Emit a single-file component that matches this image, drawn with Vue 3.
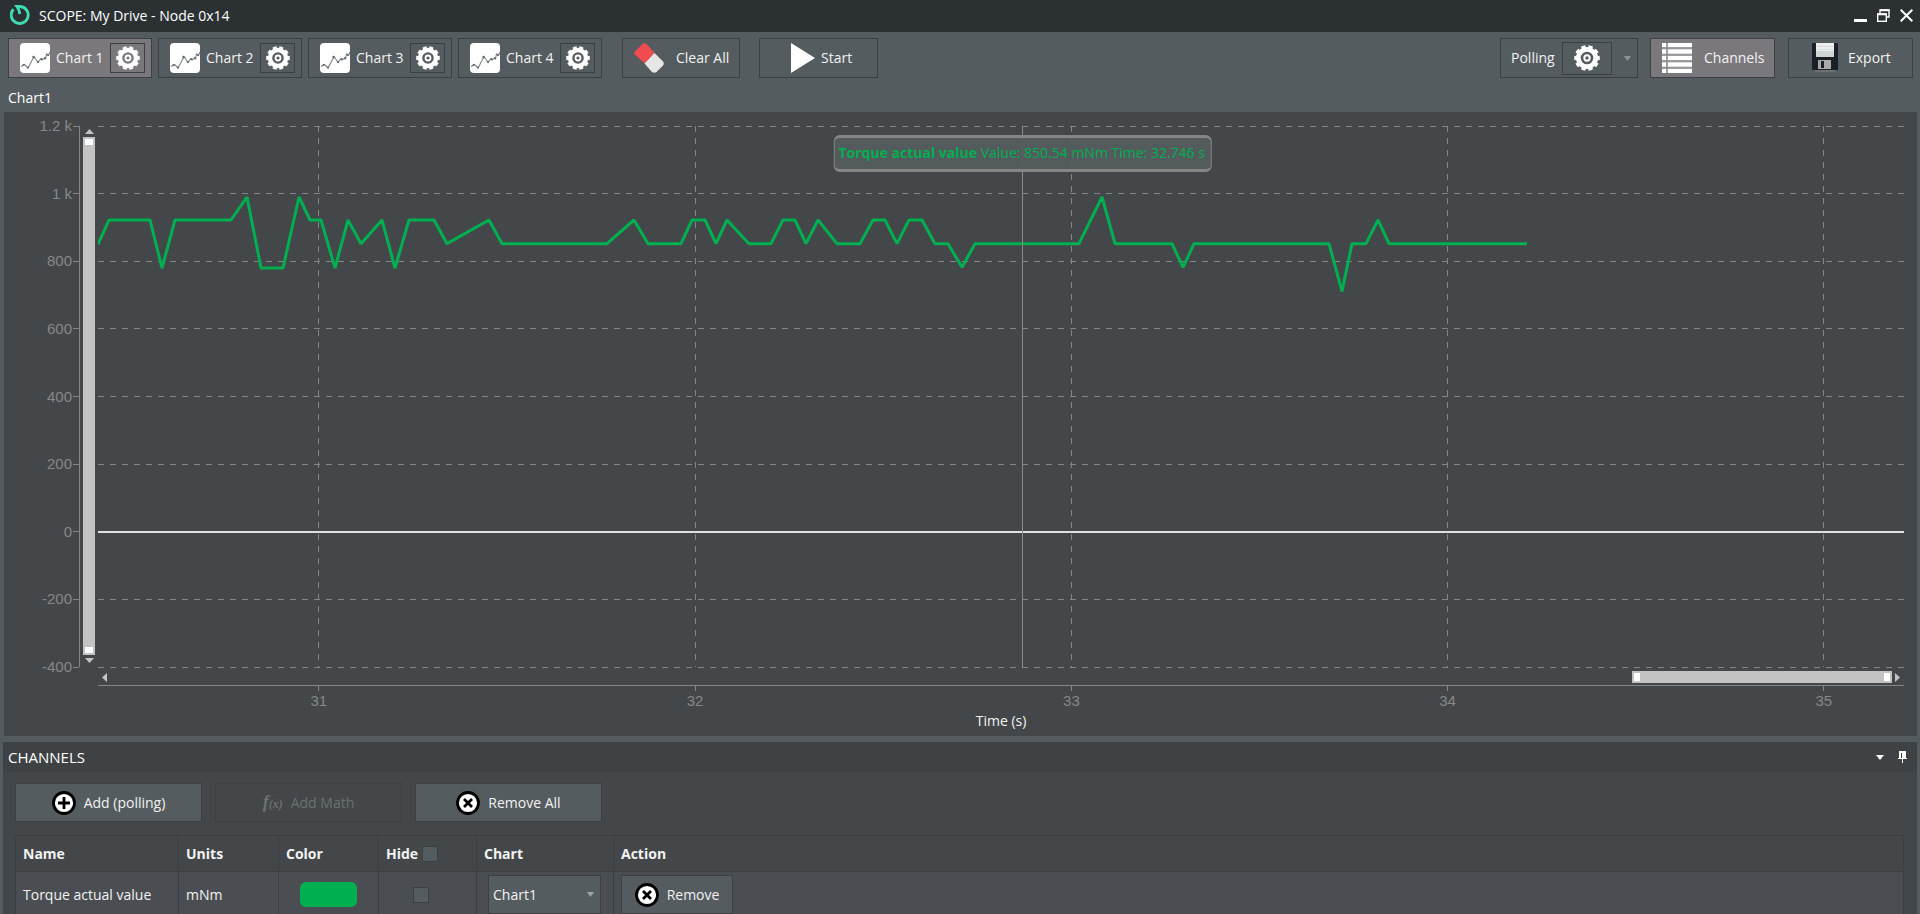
<template>
  <div class="scope-window">
    <svg class="symbols" aria-hidden="true">
      <symbol id="gear" viewBox="0 0 24 24">
        <circle cx="12" cy="12" r="8" fill="none" stroke="#fff" stroke-width="4.4" />
        <circle cx="12" cy="12" r="10.6" fill="none" stroke="#fff" stroke-width="2.4" pathLength="100" stroke-dasharray="6 4" stroke-dashoffset="3" />
        <circle cx="12" cy="12" r="2.5" fill="none" stroke="#fff" stroke-width="1.8" />
      </symbol>
      <symbol id="line-chart" viewBox="0 0 30 30">
        <rect width="30" height="30" rx="4" fill="#fff" />
        <path d="M1 23.5 L4.5 21.5 L8 25 L13 15.5 L14.5 14 L18 19.5 L20.5 16 L22 17 L24 15.5 L25.5 16 L26.5 11 L28.5 12.5 L30 9" fill="none" stroke="#7c8386" stroke-width="1.1" />
        <g fill="#62696c">
          <circle cx="3.5" cy="22" r="1" /><circle cx="8" cy="24.5" r="1" /><circle cx="13.5" cy="14" r="1.2" />
          <circle cx="18" cy="19" r="1.1" /><circle cx="21.5" cy="16" r="1.1" /><circle cx="25" cy="15" r="1.1" /><circle cx="28" cy="12" r="1" />
        </g>
      </symbol>
      <symbol id="circle-x" viewBox="0 0 24 24">
        <circle cx="12" cy="12" r="10.5" fill="#fff" stroke="#000" stroke-width="2.8" />
        <path d="M8 8 L16 16 M16 8 L8 16" stroke="#000" stroke-width="2.8" />
      </symbol>
    </svg>

    <header class="titlebar">
      <svg class="logo" viewBox="0 0 20 20" aria-hidden="true">
        <path d="M3.4 4.2 A8.5 8.5 0 1 0 10.5 1.5 L7 1.5 Q9.4 4.6 9.8 9" fill="none" stroke="#3fdcb4" stroke-width="2.9" />
      </svg>
      <h1>SCOPE: My Drive - Node 0x14</h1>
      <div class="window-buttons">
        <button type="button" aria-label="Minimize">
          <svg width="13" height="13" viewBox="0 0 13 13"><path d="M0 11.5 H13" stroke="#fff" stroke-width="3" /></svg>
        </button>
        <button type="button" aria-label="Restore">
          <svg width="13" height="13" viewBox="0 0 13 13" fill="none" stroke="#fff">
            <path d="M3 4 V1 H12 V8 H10" stroke-width="1.4" /><path d="M3 1.2 H12.5 M0 5.2 H9.5" stroke-width="2" /><rect x=".7" y="5" width="8.6" height="7.3" stroke-width="1.4" />
          </svg>
        </button>
        <button type="button" aria-label="Close">
          <svg width="13" height="13" viewBox="0 0 13 13"><path d="M.7 .7 L12.3 12.3 M12.3 .7 L.7 12.3" stroke="#fff" stroke-width="2" /></svg>
        </button>
      </div>
    </header>

    <nav class="toolbar">
      <div class="chart-tabs">
        <div v-for="n in 4" :key="n" class="tool chart-tab" :class="{ active: activeChart === n }">
          <button type="button" class="chart-select" @click="activeChart = n">
            <svg class="icon-lg"><use href="#line-chart" /></svg>
            Chart {{ n }}
          </button>
          <button type="button" class="gear-button" :aria-label="`Chart ${n} settings`">
            <svg class="icon-gear"><use href="#gear" /></svg>
          </button>
        </div>
      </div>
      <button type="button" class="tool clear">
        <svg class="icon-lg" viewBox="0 0 30 30">
          <path d="M1 8.5 L8.5 1 Q10.5 -.5 12.5 1 L20.5 10 L10.5 20.5 L1 11.5 Q-.5 10 1 8.5Z" fill="#f04b4e" />
          <path d="M20.5 10 L29 18.5 Q30.5 20.5 29 22.5 L22.5 29 Q20 30.5 18 29 L10.5 20.5Z" fill="#e6e6e6" />
        </svg>
        Clear All
      </button>
      <button type="button" class="tool start">
        <svg width="24" height="30" viewBox="0 0 24 30"><path d="M0 0 L24 15 L0 30Z" fill="#fff" /></svg>
        Start
      </button>
      <div class="tool polling">
        <span>Polling</span>
        <button type="button" class="gear-button wide" aria-label="Polling settings">
          <svg class="icon-gear large"><use href="#gear" /></svg>
        </button>
        <button type="button" class="plain polling-menu" aria-label="Polling options">
          <svg width="7" height="5" viewBox="0 0 7 5"><path d="M0 0 H7 L3.5 5Z" fill="#8f9393" /></svg>
        </button>
      </div>
      <button type="button" class="tool channels-toggle" :class="{ active: showChannels }" @click="showChannels = !showChannels">
        <svg class="icon-lg" viewBox="0 0 30 30">
          <path d="M0 2 H30 M0 8.5 H30 M0 15 H30 M0 21.5 H30 M0 28 H30" stroke="#fff" stroke-width="4.4" />
          <path d="M0 5.2 H30 M0 11.8 H30 M0 18.2 H30 M0 24.8 H30" stroke="#a5a3a7" stroke-width="1" />
          <path d="M5 0 V30" stroke="#8d8a8f" stroke-width="1.6" />
        </svg>
        Channels
      </button>
      <button type="button" class="tool export">
        <svg width="26" height="30" viewBox="0 0 26 30">
          <rect y="0" width="26" height="27" rx="1" fill="#1c1e28" />
          <rect x="4" y="0" width="18" height="14" fill="#eceeee" />
          <path d="M4 8 H22 V14 H4Z" fill="#cfd4d5" />
          <path d="M5 3.5 H21 M5 6.5 H21" stroke="#d5d9da" />
          <rect x="6" y="17" width="13" height="9" fill="#a9a9a9" />
          <rect x="9" y="18" width="3" height="7" fill="#1c1e28" />
          <path d="M3 28 H23" stroke="#7c8486" />
        </svg>
        Export
      </button>
    </nav>

    <h2 class="chart-title">Chart{{ activeChart }}</h2>

    <main class="chart-panel">
      <svg class="y-axis">
        <line x1="75" x2="75" y1="0" y2="100%" class="axis" />
        <g v-for="tick in yTicks" :key="tick.label">
          <line x1="69" x2="75" :y1="tick.pos" :y2="tick.pos" class="axis" />
          <text x="68" :y="tick.pos" dy="5" text-anchor="end">{{ tick.label }}</text>
        </g>
      </svg>
      <div class="scroll-y">
        <svg width="9" height="5" viewBox="0 0 9 5"><path d="M0 5 L4.5 0 L9 5Z" fill="#c4c4c4" /></svg>
        <div class="thumb"><i></i><i></i></div>
        <svg width="9" height="5" viewBox="0 0 9 5"><path d="M0 0 L4.5 5 L9 0Z" fill="#c4c4c4" /></svg>
      </div>
      <div class="plot">
        <svg class="plot-area">
          <line v-for="tick in yTicks" :key="tick.label" x1="0" x2="100%" :y1="tick.pos" :y2="tick.pos" class="grid" />
          <line v-for="tick in xTicks" :key="tick.label" :x1="tick.pos" :x2="tick.pos" y1="0" y2="100%" class="grid" />
          <line x1="0" x2="100%" y1="75%" y2="75%" class="zero" />
          <svg width="100%" height="100%" viewBox="0 0 1806 1600" preserveAspectRatio="none">
            <polyline :points="trace" class="trace" />
          </svg>
          <line :x1="cursor" :x2="cursor" y1="0" y2="100%" class="cursor" />
        </svg>
        <div class="tooltip" :style="{ left: cursor }">
          <b>Torque actual value</b> Value: 850.54 mNm Time: 32.746 s
        </div>
      </div>
      <div class="x-side">
        <div class="scroll-x">
          <svg width="5" height="9" viewBox="0 0 5 9"><path d="M5 0 L0 4.5 L5 9Z" fill="#c4c4c4" /></svg>
          <div class="thumb horizontal"><i></i><i></i></div>
          <svg width="5" height="9" viewBox="0 0 5 9"><path d="M0 0 L5 4.5 L0 9Z" fill="#c4c4c4" /></svg>
        </div>
        <svg class="x-axis">
          <line x1="0" x2="100%" y1="1" y2="1" class="axis" />
          <g v-for="tick in xTicks" :key="tick.label">
            <line :x1="tick.pos" :x2="tick.pos" y1="1" y2="7" class="axis" />
            <text :x="tick.pos" y="22" text-anchor="middle">{{ tick.label }}</text>
          </g>
        </svg>
        <p class="x-title">Time (s)</p>
      </div>
    </main>

    <section v-if="showChannels" class="channels">
      <div class="channels-header">
        <h2>CHANNELS</h2>
        <button type="button" class="plain" aria-label="Panel menu">
          <svg width="8" height="5" viewBox="0 0 8 5"><path d="M0 0 H8 L4 5Z" fill="#fff" /></svg>
        </button>
        <button type="button" class="plain" aria-label="Pin panel">
          <svg width="9" height="12" viewBox="0 0 9 12"><path d="M1 0 H8 V7 H9 V8 H5 V12 H4 V8 H0 V7 H1Z" fill="#fff" /><path d="M3.5 2 V7" stroke="#3e4244" /></svg>
        </button>
      </div>
      <div class="channel-actions">
        <button type="button" class="action">
          <svg class="icon-circle" viewBox="0 0 24 24">
            <circle cx="12" cy="12" r="10.5" fill="#fff" stroke="#000" stroke-width="2.8" />
            <path d="M12 6 V18 M6 12 H18" stroke="#000" stroke-width="2.8" />
          </svg>
          Add (polling)
        </button>
        <button type="button" class="action" disabled>
          <span class="fx" aria-hidden="true">f<small>(x)</small></span>
          Add Math
        </button>
        <button type="button" class="action">
          <svg class="icon-circle"><use href="#circle-x" /></svg>
          Remove All
        </button>
      </div>
      <table>
        <colgroup>
          <col class="col-name"><col class="col-units"><col class="col-color"><col class="col-hide"><col class="col-chart"><col>
        </colgroup>
        <thead>
          <tr>
            <th>Name</th>
            <th>Units</th>
            <th>Color</th>
            <th><label class="hide-all">Hide <input v-model="hideAll" type="checkbox"></label></th>
            <th>Chart</th>
            <th>Action</th>
          </tr>
        </thead>
        <tbody>
          <tr v-for="channel in channels" :key="channel.name">
            <td>{{ channel.name }}</td>
            <td>{{ channel.units }}</td>
            <td><span class="swatch" :style="{ background: channel.color }"></span></td>
            <td class="hide-cell"><input v-model="channel.hidden" type="checkbox" :aria-label="`Hide ${channel.name}`"></td>
            <td class="chart-cell">
              <div class="select-wrap">
                <select v-model="channel.chart" :aria-label="`Chart for ${channel.name}`">
                  <option v-for="n in 4" :key="n">Chart{{ n }}</option>
                </select>
                <svg width="7" height="5" viewBox="0 0 7 5"><path d="M0 0 H7 L3.5 5Z" fill="#a0a2a3" /></svg>
              </div>
            </td>
            <td>
              <button type="button" class="action remove">
                <svg class="icon-circle"><use href="#circle-x" /></svg>
                Remove
              </button>
            </td>
          </tr>
        </tbody>
      </table>
    </section>
  </div>
</template>

<script setup>
import { ref, computed } from 'vue'

const activeChart = ref(1)
const showChannels = ref(true)
const hideAll = ref(false)
const cursor = '51.2%'

const channels = ref([
  { name: 'Torque actual value', units: 'mNm', color: '#00b050', hidden: false, chart: 'Chart1' }
])

const yLabels = ['1.2 k', '1 k', '800', '600', '400', '200', '0', '-200', '-400']
const yTicks = yLabels.map((label, i) => ({ label, pos: `${i * 12.5}%` }))
const xTicks = [31, 32, 33, 34, 35].map(label => ({
  label,
  pos: `${((label - 30.413) / 4.8 * 100).toFixed(2)}%`
}))

// [horizontal step, torque in mNm]
const samples = [
  [0, 850], [11, 922], [52, 922], [64, 780], [77, 922], [133, 922], [149, 990], [163, 780],
  [185, 780], [201, 990], [212, 922], [223, 922], [237, 780], [250, 922], [263, 852], [284, 922],
  [297, 780], [311, 922], [336, 922], [349, 852], [391, 922], [404, 852], [509, 852], [536, 922],
  [550, 852], [583, 852], [594, 922], [607, 922], [618, 852], [629, 922], [651, 852], [673, 852],
  [685, 922], [697, 922], [708, 852], [720, 922], [739, 852], [762, 852], [775, 922], [787, 922],
  [799, 852], [811, 922], [824, 922], [837, 852], [850, 852], [864, 782], [877, 852], [981, 852],
  [1004, 990], [1017, 852], [1074, 852], [1085, 782], [1096, 852], [1231, 852], [1244, 711],
  [1254, 852], [1268, 852], [1280, 922], [1291, 852], [1429, 852]
]
const trace = computed(() => samples.map(([x, value]) => `${x},${1200 - value}`).join(' '))
</script>

<style>
html,
body,
#app {
  height: 100%;
}
body {
  margin: 0;
  background: #545c5f;
}
</style>

<style scoped>
* {
  box-sizing: border-box;
}
.scope-window {
  height: 100%;
  display: flex;
  flex-direction: column;
  overflow: hidden;
  background: #545c5f;
  color: #f2f2f2;
  font: 14px/20px "Open Sans", "Noto Sans", sans-serif;
}
.symbols {
  position: absolute;
  width: 0;
  height: 0;
}
svg {
  flex: none;
}
h1,
h2,
p {
  margin: 0;
  font-size: 14px;
  font-weight: 400;
}
button {
  font: inherit;
  color: inherit;
  cursor: pointer;
}

/* title bar */
.titlebar {
  flex: none;
  height: 32px;
  display: flex;
  align-items: center;
  padding: 0 7px 0 10px;
  gap: 9px;
  background: #2b3133;
}
.titlebar h1 {
  flex: 1;
  color: #fff;
}
.logo {
  width: 20px;
  height: 20px;
  margin-bottom: 2px;
}
.window-buttons {
  display: flex;
  gap: 10px;
  padding-bottom: 2px;
}
.window-buttons button,
.plain {
  display: flex;
  padding: 0;
  border: 0;
  background: none;
}

/* toolbar */
.toolbar {
  flex: none;
  display: flex;
  padding: 6px 7px 6px 8px;
}
.tool {
  display: flex;
  align-items: center;
  height: 40px;
  border: 1px solid #3c4042;
  background: #545c5f;
  padding: 0 8px 0 11px;
}
.tool.active {
  background: #7b787d;
}
.chart-tabs {
  display: flex;
  gap: 6px;
  margin-right: 20px;
}
.chart-tab {
  width: 144px;
  padding-right: 6px;
  justify-content: space-between;
}
.chart-select {
  display: flex;
  align-items: center;
  gap: 6px;
  padding: 0;
  border: 0;
  background: none;
}
.icon-lg {
  width: 30px;
  height: 30px;
}
.icon-gear {
  width: 24px;
  height: 24px;
}
.icon-gear.large {
  width: 26px;
  height: 26px;
}
.gear-button {
  display: flex;
  align-items: center;
  justify-content: center;
  width: 35px;
  height: 30px;
  padding: 0;
  border: 1px solid #3c4042;
  background: none;
}
.gear-button.wide {
  width: 50px;
  height: 33px;
}
.clear {
  width: 118px;
  gap: 12px;
  margin-right: 19px;
}
.start {
  width: 119px;
  padding-left: 31px;
  gap: 6px;
}
.polling {
  width: 138px;
  margin-left: auto;
  padding: 0 6px 0 10px;
  gap: 7px;
}
.polling-menu {
  margin-left: auto;
}
.channels-toggle {
  width: 125px;
  gap: 12px;
  margin: 0 13px 0 12px;
}
.export {
  width: 125px;
  padding-left: 23px;
  gap: 10px;
}
.chart-title {
  flex: none;
  padding: 4px 8px;
  color: #fff;
}

/* chart */
.chart-panel {
  flex: 1;
  min-height: 0;
  display: grid;
  grid-template-columns: 79px 12px 1fr;
  grid-template-rows: 1fr 69px;
  margin: 0 3px 0 4px;
  padding: 14px 13px 0 0;
  background: #434749;
}
.y-axis,
.x-axis,
.plot-area {
  display: block;
  width: 100%;
  overflow: visible;
  font: 15px "Liberation Sans", Arial, sans-serif;
  fill: #85888a;
}
.y-axis,
.plot-area {
  height: 100%;
}
.axis {
  stroke: #858585;
  shape-rendering: crispEdges;
}
.grid {
  stroke: #858585;
  stroke-dasharray: 6 6;
  shape-rendering: crispEdges;
}
.zero {
  stroke: #e0e0e0;
  stroke-width: 2;
  shape-rendering: crispEdges;
}
.cursor {
  stroke: #8c8c8c;
  shape-rendering: crispEdges;
}
.trace {
  fill: none;
  stroke: #00b050;
  stroke-width: 3;
  stroke-linejoin: bevel;
  vector-effect: non-scaling-stroke;
}
.scroll-y {
  display: flex;
  flex-direction: column;
  align-items: center;
  gap: 3px;
  padding: 3px 0 4px;
}
.thumb {
  display: flex;
  flex-direction: column;
  justify-content: space-between;
  flex: 1;
  width: 12px;
  padding: 2px;
  background: #c3c3c3;
}
.thumb i {
  width: 8px;
  height: 6px;
  background: #fff;
}
.thumb.horizontal {
  flex: none;
  flex-direction: row;
  width: 260px;
  height: 12px;
  margin-left: auto;
}
.thumb.horizontal i {
  width: 6px;
  height: 8px;
}
.plot {
  position: relative;
  min-height: 0;
  margin-left: 3px;
}
.tooltip {
  position: absolute;
  top: 9px;
  transform: translateX(-50%);
  padding: 5px 6px 6px 4px;
  border: 1px solid #858585;
  border-width: 3px 1px;
  border-radius: 6px;
  background: rgba(84, 92, 95, 0.94);
  color: #00b050;
  white-space: nowrap;
}
.x-side {
  grid-column: 3;
  margin-left: 3px;
}
.scroll-x {
  display: flex;
  align-items: center;
  gap: 3px;
  padding: 4px 4px 1px;
}
.x-axis {
  height: 27px;
}
.x-title {
  text-align: center;
}

/* channels */
.channels {
  flex: none;
  height: 172px;
  margin: 6px 3px 0;
  overflow: hidden;
  background: #434749;
}
.channels-header {
  display: flex;
  align-items: center;
  gap: 14px;
  height: 30px;
  padding: 0 10px 0 5px;
  background: #3e4244;
}
.channels-header h2 {
  flex: 1;
  font-size: 15px;
  color: #fff;
}
.channel-actions {
  display: flex;
  gap: 13px;
  padding: 11px 12px 13px;
}
.action {
  display: flex;
  align-items: center;
  justify-content: center;
  gap: 8px;
  width: 187px;
  height: 39px;
  padding: 0;
  border: 1px solid #3c4042;
  background: #545c5f;
}
.action:disabled {
  background: none;
  color: #6c7072;
  cursor: default;
}
.icon-circle {
  width: 24px;
  height: 24px;
}
.fx {
  font: italic bold 18px/20px "Liberation Serif", serif;
}
.fx small {
  font-size: 12px;
}
table {
  width: calc(100% - 25px);
  margin-left: 12px;
  table-layout: fixed;
  border-collapse: collapse;
}
.col-name {
  width: 163px;
}
.col-units,
.col-color {
  width: 100px;
}
.col-hide {
  width: 98px;
}
.col-chart {
  width: 137px;
}
th,
td {
  padding: 0 8px 0 7px;
  border: 1px solid #3b3f41;
  text-align: left;
}
th {
  height: 36px;
  font-weight: 700;
}
td {
  height: 46px;
  background: #4a4e52;
}
.hide-all {
  display: flex;
  align-items: center;
  gap: 4px;
}
input[type="checkbox"] {
  appearance: none;
  display: block;
  width: 16px;
  height: 16px;
  margin: 0;
  border: 1px solid #3c4042;
  background: #545c5f;
}
input[type="checkbox"]:checked {
  background: #c3c3c3;
}
.hide-cell {
  padding-left: 34px;
}
.swatch {
  display: block;
  width: 57px;
  height: 25px;
  margin: 0 auto;
  border-radius: 6px;
}
.chart-cell {
  padding: 0 12px 0 11px;
}
.select-wrap {
  display: grid;
  align-items: center;
}
.select-wrap > * {
  grid-area: 1 / 1;
}
.select-wrap svg {
  justify-self: end;
  margin-right: 7px;
  pointer-events: none;
}
select {
  appearance: none;
  width: 100%;
  height: 39px;
  padding: 0 4px;
  border: 1px solid #3c4042;
  border-radius: 0;
  background: #545c5f;
  color: inherit;
  font: inherit;
}
.remove {
  width: 112px;
}
</style>
